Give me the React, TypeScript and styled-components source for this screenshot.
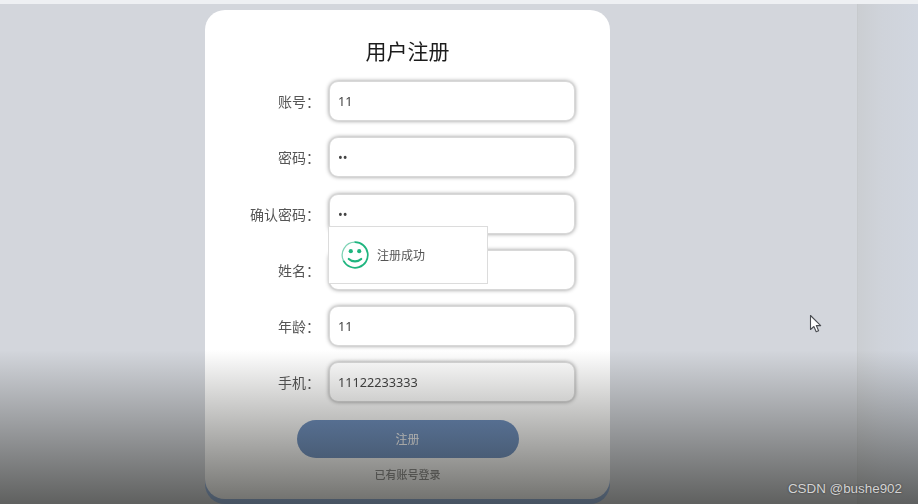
import React from "react";
import styled, { createGlobalStyle } from "styled-components";

const GlobalStyle = createGlobalStyle`
  html, body {
    margin: 0;
    padding: 0;
    background: #d3d7de;
    font-family: "Noto Sans CJK SC", "Noto Sans", sans-serif;
  }
`;

const Screen = styled.div`
  position: relative;
  width: 918px;
  height: 504px;
  overflow: hidden;
  background: #d3d7de;
`;

const Page = styled.div`
  display: flex;
  height: 504px;
  padding-top: 4px;
  box-sizing: border-box;
  background: linear-gradient(#eef0f3 0 4px, #d3d7de 4px);
  filter: blur(0.4px);
`;

const LeftPane = styled.main`
  width: 857px;
  box-sizing: border-box;
  padding: 6px 0 0 205px;
  background: #d3d6dc;
`;

const RightPane = styled.aside`
  flex: 1;
  border-left: 1px solid #c7cacd;
  background: linear-gradient(90deg, #cbced2 0, #cfd3da 24px, #d1d6df 100%);
`;

const Card = styled.form`
  position: relative;
  display: flex;
  flex-direction: column;
  align-items: center;
  width: 405px;
  height: 489px;
  box-sizing: border-box;
  padding-top: 23px;
  background: #fff;
  border-radius: 20px;
  box-shadow: 0 5px 0 #8fb0e0;
`;

const Title = styled.h1`
  margin: 0 0 14px;
  height: 34px;
  font-size: 21px;
  line-height: 34px;
  font-weight: 400;
  color: #1c1c1c;
`;

const Fields = styled.div`
  display: flex;
  flex-direction: column;
  gap: 16.3px;
  width: 100%;
`;

const Row = styled.div`
  display: flex;
  align-items: center;
  padding-left: 24px;
`;

const Label = styled.label`
  width: 91px;
  margin-right: 9px;
  text-align: right;
  font-size: 14px;
  color: #555;
  white-space: nowrap;
`;

const Input = styled.input`
  width: 246px;
  height: 40px;
  box-sizing: border-box;
  padding: 0 8px;
  border: 1px solid #d8d8d8;
  border-radius: 9px;
  outline: none;
  background: #fff;
  box-shadow: 0 0 4px rgba(0, 0, 0, 0.42);
  font-family: "Noto Sans", sans-serif;
  font-size: 12.7px;
  color: #444;
`;

const SubmitButton = styled.button`
  width: 222px;
  height: 38px;
  margin-top: 17.5px;
  border: none;
  border-radius: 19px;
  background: #6d90c2;
  color: #fff;
  font-family: inherit;
  font-size: 12px;
`;

const LoginLink = styled.a`
  margin-top: 8px;
  font-size: 11px;
  font-weight: 500;
  color: #8a8a8a;
`;

const Toast = styled.div`
  position: absolute;
  left: 123px;
  top: 216px;
  display: flex;
  align-items: center;
  gap: 8px;
  width: 160px;
  height: 58px;
  box-sizing: border-box;
  padding-left: 12px;
  background: #fff;
  border: 1px solid #dcdcdc;
  font-size: 12px;
  color: #555;
`;

const ToastText = styled.span`
  padding-bottom: 2px;
`;

const Shade = styled.div`
  position: absolute;
  inset: 350px 0 0 0;
  background: linear-gradient(rgba(30, 30, 25, 0), rgba(30, 30, 25, 0.64));
  pointer-events: none;
`;

const Cursor = styled.svg`
  position: absolute;
  left: 809px;
  top: 314px;
`;

const Watermark = styled.span`
  position: absolute;
  right: 16px;
  bottom: 8px;
  font-family: "Liberation Sans", sans-serif;
  font-size: 13.4px;
  color: #d4d4d4;
  text-shadow: 0 0 2px #333;
`;

const fields = [
  { label: "账号：", type: "text", value: "11" },
  { label: "密码：", type: "password", value: "11" },
  { label: "确认密码：", type: "password", value: "11" },
  { label: "姓名：", type: "text", value: "" },
  { label: "年龄：", type: "text", value: "11" },
  { label: "手机：", type: "text", value: "11122233333" },
];

const SmileIcon = () => (
  <svg width="28" height="28" viewBox="0 0 28 28" fill="none">
    <path
      d="M14 1.2a12.8 12.8 0 1 1-11.4 18.6"
      stroke="#1fb57f"
      strokeWidth="1.7"
      strokeLinecap="round"
    />
    <path
      d="M2.6 19.8A12.8 12.8 0 0 1 14 1.2"
      stroke="#7fd3b6"
      strokeWidth="1.3"
    />
    <circle cx="9.8" cy="10.2" r="2.1" fill="#1fb57f" />
    <circle cx="18.2" cy="10.2" r="2.1" fill="#1fb57f" />
    <path
      d="M7.8 18c3.3 3.2 9.1 3.2 12.4 0"
      stroke="#1fb57f"
      strokeWidth="2.2"
      strokeLinecap="round"
    />
  </svg>
);

export default function App() {
  return (
    <Screen>
      <GlobalStyle />
      <Page>
        <LeftPane>
          <Card onSubmit={(e) => e.preventDefault()}>
            <Title>用户注册</Title>
            <Fields>
              {fields.map((f) => (
                <Row key={f.label}>
                  <Label>{f.label}</Label>
                  <Input type={f.type} defaultValue={f.value} readOnly />
                </Row>
              ))}
            </Fields>
            <SubmitButton type="submit">注册</SubmitButton>
            <LoginLink>已有账号登录</LoginLink>
            <Toast>
              <SmileIcon />
              <ToastText>注册成功</ToastText>
            </Toast>
          </Card>
        </LeftPane>
        <RightPane />
      </Page>
      <Shade />
      <Cursor width="14" height="20" viewBox="0 0 14 20">
        <path
          d="M1.5 1.5v14l3.4-3 2.3 5.2 2.4-1-2.3-5.1h4.4z"
          fill="#fff"
          stroke="#4a4d52"
          strokeWidth="1.1"
          strokeLinejoin="round"
        />
      </Cursor>
      <Watermark>CSDN @bushe902</Watermark>
    </Screen>
  );
}
